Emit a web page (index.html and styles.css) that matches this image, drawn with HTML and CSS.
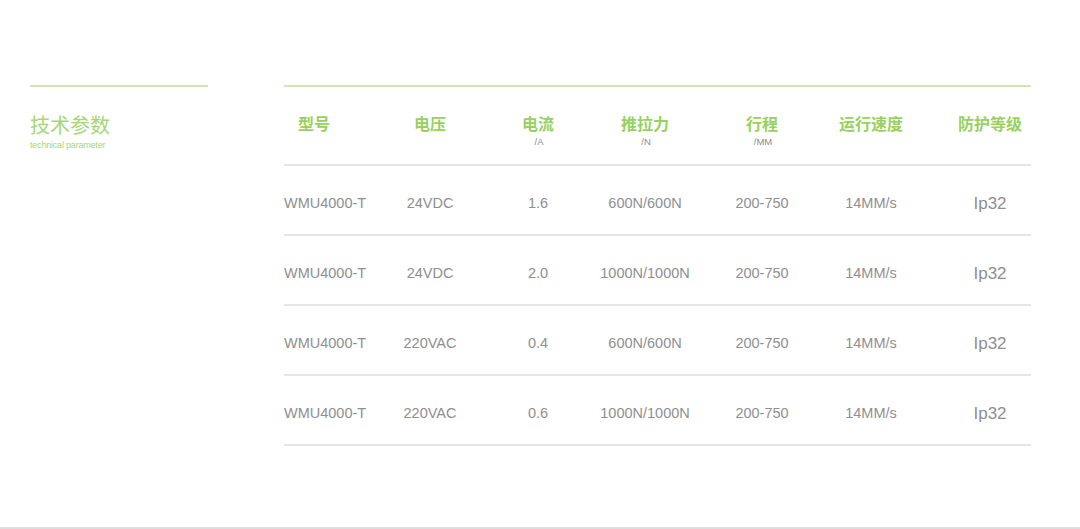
FILE: index.html
```html
<!DOCTYPE html>
<html lang="zh">
<head>
<meta charset="utf-8">
<title>技术参数</title>
<link rel="stylesheet" href="styles.css">
</head>
<body>
<div class="page">
  <aside class="side">
    <h2 class="title">技术参数</h2>
    <p class="subtitle">technical parameter</p>
  </aside>
  <section class="table">
    <div class="row head">
      <div class="cell c1"><span class="hd">型号</span></div>
      <div class="cell"><span class="hd">电压</span></div>
      <div class="cell"><span class="hd">电流</span><span class="unit">/A</span></div>
      <div class="cell"><span class="hd">推拉力</span><span class="unit">/N</span></div>
      <div class="cell"><span class="hd">行程</span><span class="unit">/MM</span></div>
      <div class="cell"><span class="hd">运行速度</span></div>
      <div class="cell c7"><span class="hd">防护等级</span></div>
    </div>
    <div class="row">
      <div class="cell c1">WMU4000-T</div>
      <div class="cell">24VDC</div>
      <div class="cell">1.6</div>
      <div class="cell">600N/600N</div>
      <div class="cell">200-750</div>
      <div class="cell">14MM/s</div>
      <div class="cell c7 ip">Ip32</div>
    </div>
    <div class="row">
      <div class="cell c1">WMU4000-T</div>
      <div class="cell">24VDC</div>
      <div class="cell">2.0</div>
      <div class="cell">1000N/1000N</div>
      <div class="cell">200-750</div>
      <div class="cell">14MM/s</div>
      <div class="cell c7 ip">Ip32</div>
    </div>
    <div class="row">
      <div class="cell c1">WMU4000-T</div>
      <div class="cell">220VAC</div>
      <div class="cell">0.4</div>
      <div class="cell">600N/600N</div>
      <div class="cell">200-750</div>
      <div class="cell">14MM/s</div>
      <div class="cell c7 ip">Ip32</div>
    </div>
    <div class="row">
      <div class="cell c1">WMU4000-T</div>
      <div class="cell">220VAC</div>
      <div class="cell">0.6</div>
      <div class="cell">1000N/1000N</div>
      <div class="cell">200-750</div>
      <div class="cell">14MM/s</div>
      <div class="cell c7 ip">Ip32</div>
    </div>
  </section>
</div>
</body>
</html>
```
FILE: styles.css
```css
html, body {
  margin: 0;
  padding: 0;
  background: #ffffff;
}
body {
  font-family: "Liberation Sans", "Noto Sans CJK SC", sans-serif;
}
.page {
  box-sizing: border-box;
  height: 529px;
  border-bottom: 2px solid #dddddd;
  display: flex;
  align-items: flex-start;
  padding: 85px 0 0 30px;
  gap: 76px;
}
.side {
  width: 178px;
  border-top: 2px solid #cfe8b3;
}
.title {
  margin: 26px 0 0;
  font-size: 20px;
  line-height: 24px;
  font-weight: normal;
  color: #a6d676;
  font-family: "Noto Sans CJK SC", sans-serif;
}
.subtitle {
  margin: 3px 0 0;
  font-size: 9px;
  line-height: 11px;
  color: #a6d676;
  letter-spacing: -0.2px;
}
.table {
  width: 747px;
  border-top: 2px solid #cfe8b3;
}
.row {
  display: grid;
  grid-template-columns: 84px 124px 92px 122px 112px 106px 107px;
  box-sizing: border-box;
  height: 70px;
  padding-top: 6px;
  border-bottom: 2px solid #e6e6e6;
  align-items: center;
  font-size: 14.5px;
  color: #8f8f8f;
}
.row.head {
  height: 79px;
  padding-top: 0;
  align-items: start;
}
.cell {
  text-align: center;
  white-space: nowrap;
  display: flex;
  flex-direction: column;
  align-items: center;
}
.c1 {
  align-items: flex-start;
}
.head .c1 {
  padding-left: 14px;
}
.c7 {
  padding-left: 25px;
}
.ip {
  font-size: 17px;
  padding-top: 2px;
}
.hd {
  margin-top: 25px;
  font-family: "Noto Sans CJK SC", sans-serif;
  font-weight: bold;
  font-size: 16px;
  line-height: 22px;
  color: #97d15e;
}
.unit {
  font-size: 9.5px;
  line-height: 12px;
  color: #8c8c8c;
  margin-top: 2px;
  margin-left: 2px;
}
```
